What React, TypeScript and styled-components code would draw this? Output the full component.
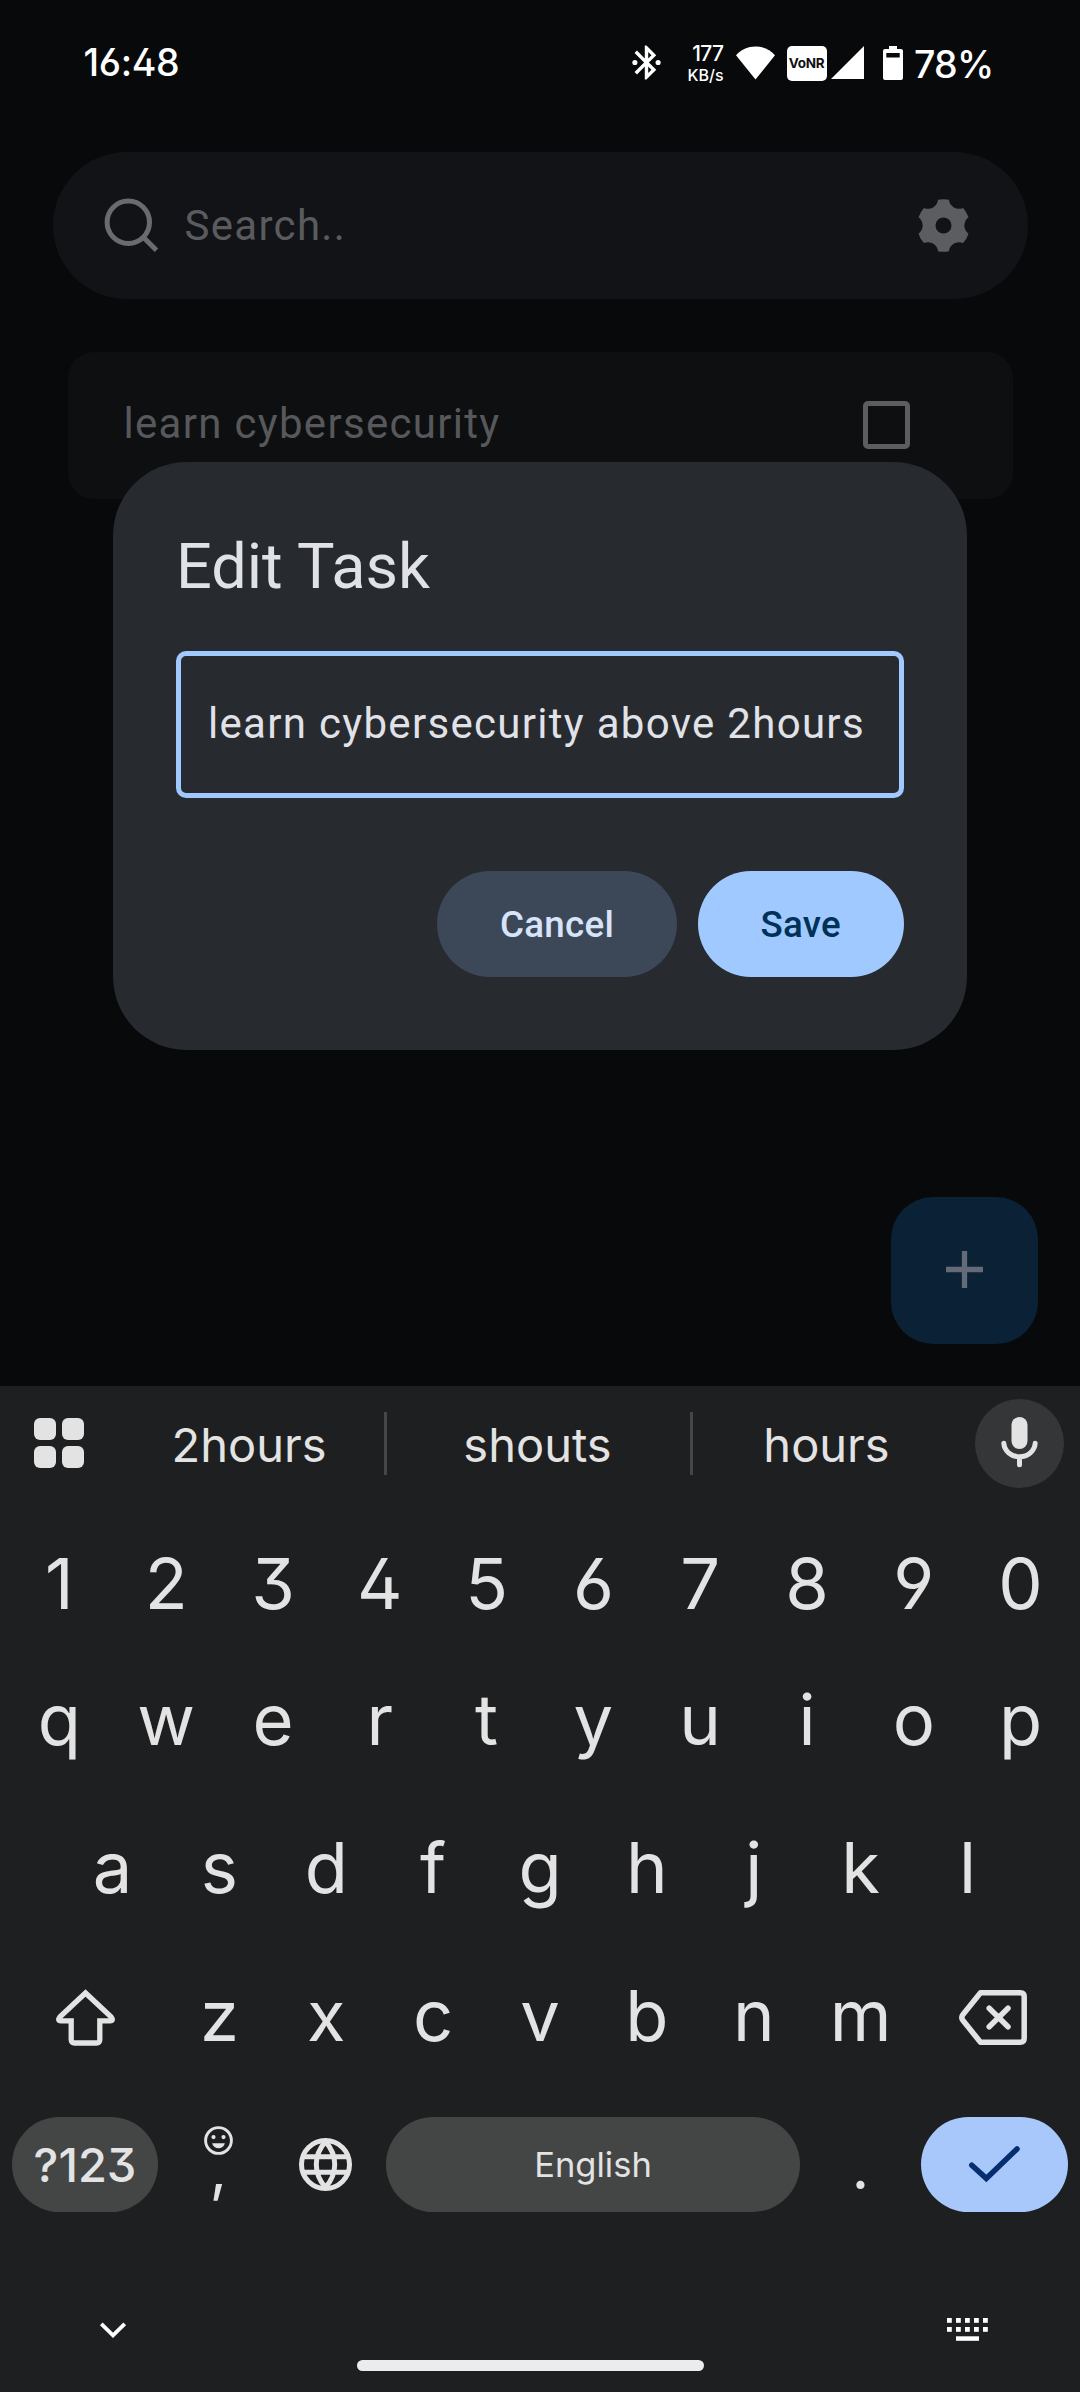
import React from 'react';
import styled, { createGlobalStyle } from 'styled-components';

const GlobalStyle = createGlobalStyle`
  *, *::before, *::after { box-sizing: border-box; }
  body { margin: 0; background: #07090a; }
  button { border: 0; padding: 0; margin: 0; background: none; font: inherit; color: inherit; }
  svg { display: block; flex: none; overflow: visible; }
`;

const roboto = `Roboto, "Noto Sans", sans-serif`;
const inter = `Inter, "Noto Sans", sans-serif`;

const Screen = styled.div`
  position: relative;
  display: flex;
  flex-direction: column;
  width: 1080px;
  height: 2392px;
  overflow: hidden;
  background: #07090a;
  font-family: ${roboto};
`;

/* ---------- status bar ---------- */

const StatusBar = styled.header`
  display: flex;
  align-items: center;
  height: 125px;
  padding: 0 89px 0 83.5px;
  color: #fff;
  font-family: ${inter};
  font-feature-settings: 'cv02', 'cv03', 'cv04';
`;

const Clock = styled.time`
  flex: 1;
  padding-top: 1px;
  font-size: 37.5px;
  font-weight: 500;
  line-height: 44px;
  letter-spacing: -0.3px;
`;

const StatusIcons = styled.div`
  display: flex;
  align-items: center;
`;

const NetSpeed = styled.div`
  display: flex;
  flex-direction: column;
  align-items: flex-end;
  width: 40px;
  margin: 4px 12px 0 17px;
  font-weight: 500;
`;

const SpeedValue = styled.span`
  font-size: 21px;
  line-height: 20px;
  letter-spacing: -0.6px;
`;

const SpeedUnit = styled.span`
  font-size: 16px;
  line-height: 22px;
`;

const NetBadge = styled.span`
  width: 40px;
  height: 35px;
  margin: 1px 4px 0 12px;
  border-radius: 5px;
  background: #fff;
  color: #111;
  font-size: 13.5px;
  font-weight: 700;
  line-height: 35px;
  text-align: center;
  letter-spacing: -0.3px;
`;

const Battery = styled.span`
  margin-top: 5px;
  width: 77px;
  margin-left: 11.5px;
  font-size: 37.5px;
  font-weight: 500;
  line-height: 44px;
  letter-spacing: -0.8px;
  white-space: nowrap;
`;

/* ---------- task list behind the dialog ---------- */

const Page = styled.main`
  display: flex;
  flex-direction: column;
  flex: 1;
  padding-top: 27px;
`;

const SearchBar = styled.div`
  display: flex;
  align-items: center;
  height: 147px;
  margin: 0 52.5px;
  padding: 0 58px 1px 51px;
  border-radius: 74px;
  background: #111317;
`;

const SearchHint = styled.span`
  flex: 1;
  margin-left: 26px;
  color: #5a5b5f;
  font-size: 42px;
  line-height: 63px;
  letter-spacing: 1.3px;
`;

const TaskCard = styled.div`
  display: flex;
  align-items: center;
  height: 147px;
  margin: 53px 67.5px 0;
  padding: 0 102.5px 1px 56px;
  border-radius: 26px;
  background: #0e0f11;
`;

const TaskTitle = styled.span`
  flex: 1;
  margin-top: -4px;
  color: #57585b;
  font-size: 42px;
  line-height: 63px;
  letter-spacing: 1.3px;
`;

const CheckBox = styled.span`
  width: 47px;
  height: 48px;
  border: 5px solid #5c5d61;
  border-radius: 5px;
`;

const Fab = styled.button`
  position: absolute;
  right: 42px;
  top: 1197px;
  display: grid;
  place-items: center;
  width: 147px;
  height: 147px;
  padding-bottom: 2px;
  border-radius: 42px;
  background: #0b2135;
`;

/* ---------- dialog ---------- */

const Dialog = styled.section`
  position: absolute;
  left: 113px;
  top: 462px;
  display: flex;
  flex-direction: column;
  width: 854px;
  height: 588px;
  padding: 63px;
  border-radius: 73.5px;
  background: #272a2f;
`;

const DialogTitle = styled.h1`
  margin: 0;
  color: #e1e2e8;
  font-size: 63px;
  font-weight: 400;
  line-height: 84px;
`;

const TextField = styled.div`
  display: flex;
  align-items: center;
  height: 147px;
  margin-top: 42px;
  padding: 0 27px;
  border: 5px solid #a0caff;
  border-radius: 10px;
  color: #e1e2e8;
  font-size: 42px;
  line-height: 63px;
  letter-spacing: 1.3px;
  white-space: nowrap;
`;

const FieldValue = styled.span`
  margin-top: -2px;
`;

const Actions = styled.div`
  display: flex;
  justify-content: flex-end;
  gap: 20.5px;
  margin-top: 73px;
`;

const PillButton = styled.button<{ $primary?: boolean }>`
  width: ${p => (p.$primary ? 206.5 : 240)}px;
  height: 105.5px;
  padding-top: 2px;
  border-radius: 53px;
  background: ${p => (p.$primary ? '#a0caff' : '#3c4858')};
  color: ${p => (p.$primary ? '#003258' : '#d7e3f8')};
  font-size: 36.75px;
  font-weight: 500;
  line-height: 103.5px;
  letter-spacing: 0.26px;
  text-align: center;
`;

/* ---------- keyboard ---------- */

const Keyboard = styled.section`
  display: flex;
  flex-direction: column;
  height: 1006px;
  background: #1e1f21;
  color: #e3e3e3;
  font-family: ${inter};
  font-feature-settings: 'cv02', 'cv03', 'cv04', 'cv09';
`;

const SuggestionBar = styled.div`
  display: flex;
  align-items: center;
  height: 115px;
  margin-bottom: 20px;
  padding: 0 16px 0 34px;
`;

const AppsGrid = styled.span`
  display: grid;
  margin-bottom: 1px;
  grid-template-columns: 22px 22px;
  grid-auto-rows: 22px;
  gap: 6px;
`;

const AppsCell = styled.span`
  border-radius: 6px;
  background: #e3e3e3;
`;

const Suggestions = styled.div`
  display: flex;
  align-items: center;
  width: 846px;
  margin: 0 18px 0 27px;
`;

const Suggestion = styled.span<{ $width: number; $nudge?: number }>`
  width: ${p => p.$width}px;
  padding-top: 2px;
  text-indent: ${p => p.$nudge ?? 0}px;
  font-size: 47px;
  line-height: 56px;
  text-align: center;
`;

const Divider = styled.span`
  width: 3px;
  height: 63px;
  background: #444647;
`;

const MicButton = styled.button`
  display: grid;
  place-items: center;
  width: 89px;
  height: 89px;
  padding-bottom: 2px;
  border-radius: 50%;
  background: #353638;
`;

const KeyRow = styled.div<{ $height?: number; $inset?: number }>`
  display: flex;
  align-items: center;
  height: ${p => p.$height ?? 148}px;
  padding: 0 ${p => p.$inset ?? 6}px;
`;

const Key = styled.button`
  flex: 1;
  padding-top: 1px;
  font-size: 70.5px;
  line-height: 100px;
  text-align: center;
`;

const WideKey = styled.button`
  display: grid;
  place-items: center;
  width: 160px;
  height: 100px;
  padding: 4px 2px 0 0;
`;

const BottomRow = styled.div`
  display: flex;
  align-items: center;
  gap: 7px;
  height: 150px;
  padding: 0 12px;
`;

const PillKey = styled.button<{ $width: number; $accent?: boolean; $size?: number; $weight?: number }>`
  display: flex;
  align-items: center;
  justify-content: center;
  width: ${p => p.$width}px;
  height: 95px;
  border-radius: 48px;
  background: ${p => (p.$accent ? '#a8c7fa' : '#444645')};
  font-size: ${p => p.$size ?? 34.5}px;
  font-weight: ${p => p.$weight ?? 400};
`;

const KeyPair = styled.div`
  display: flex;
`;

const SmallKey = styled.button`
  display: flex;
  flex-direction: column;
  align-items: center;
  justify-content: center;
  width: 107px;
  height: 95px;
`;

const Comma = styled.span`
  height: 48px;
  font-size: 60px;
  line-height: 27px;
`;

const Period = styled.span`
  padding-top: 6px;
  font-size: 62px;
  line-height: 80px;
`;

const NavRow = styled.div`
  display: flex;
  align-items: flex-start;
  justify-content: space-between;
  height: 121px;
  padding: 79px 92px 0 100px;
`;

const HomeBar = styled.div`
  width: 347px;
  height: 10.5px;
  margin: 0 376px 0 357px;
  border-radius: 6px;
  background: #ececec;
`;

/* ---------- icons ---------- */

const gearPath = (() => {
  const point = (deg: number) => {
    const a = (deg * Math.PI) / 180;
    return `${(26.3 * Math.cos(a)).toFixed(2)} ${(26.3 * Math.sin(a)).toFixed(2)}`;
  };
  let d = `M${point(-102)}`;
  for (let i = 0; i < 6; i++) {
    const c = -90 + i * 60;
    d += `A26.3 26.3 0 0 1 ${point(c + 12)}A10 10 0 0 0 ${point(c + 48)}`;
  }
  return `${d}Z M8 0A8 8 0 1 0 -8 0A8 8 0 1 0 8 0Z`;
})();

const GearIcon = () => (
  <svg width="53" height="53" viewBox="-26.5 -26.5 53 53">
    <path d={gearPath} fill="#5c5d61" fillRule="evenodd" />
  </svg>
);

const SearchIcon = () => (
  <svg width="55" height="55" viewBox="0 0 55 55" fill="none" stroke="#6a6b6d" strokeWidth="5">
    <circle cx="24.3" cy="24.3" r="21.2" />
    <path d="M38.8 38.8L52.5 52.3" />
  </svg>
);

const BluetoothIcon = () => (
  <svg width="41" height="41" viewBox="0 0 24 24" fill="#fff">
    <circle cx="5.2" cy="12" r="1.5" />
    <circle cx="18.8" cy="12" r="1.5" />
    <path d="M17.71 7.71L12 2h-1v7.59L6.41 5 5 6.41 10.59 12 5 17.59 6.41 19 11 14.41V22h1l5.71-5.71-4.3-4.29 4.3-4.29zM13 5.83l1.88 1.88L13 9.59V5.83zm1.88 10.46L13 18.17v-3.76l1.88 1.88z" />
  </svg>
);

const WifiIcon = () => (
  <svg width="39" height="34" viewBox="0 0 39 34" fill="#fff">
    <path d="M0 9.2C5 3.5 12 .5 19.5 .5S34 3.5 39 9.2L19.5 33.5Z" />
  </svg>
);

const SignalIcon = () => (
  <svg width="33" height="33" viewBox="0 0 33 33" fill="#fff">
    <path d="M0 33L33 0V33Z" />
  </svg>
);

const BatterySlot = styled.span`
  margin-left: 19px;
`;

const BatteryIcon = () => (
  <BatterySlot>
    <svg width="20" height="34" viewBox="0 0 20 34" fill="#fff">
      <path fillRule="evenodd" d="M6 0H14V3H18Q20 3 20 5V32Q20 34 18 34H2Q0 34 0 32V5Q0 3 2 3H6ZM3.3 7V11.6H16.7V7Z" />
    </svg>
  </BatterySlot>
);

const PlusIcon = () => (
  <svg width="37" height="37" viewBox="0 0 37 37" stroke="#646b78" strokeWidth="5.3">
    <path d="M18.5 0V37M0 18.5H37" />
  </svg>
);

const MicIcon = () => (
  <svg width="37" height="51" viewBox="0 0 37 51" fill="none" stroke="#e3e3e3" strokeWidth="5" strokeLinecap="round">
    <rect x="10.5" y="0" width="16" height="32" rx="8" fill="#e3e3e3" stroke="none" />
    <path d="M2.8 26.2C3.2 33.8 10 39.8 18.5 39.8S33.8 33.8 34.2 26.2M18.5 40V47.7" />
  </svg>
);

const ShiftIcon = () => (
  <svg width="59" height="57" viewBox="0 0 59 57" fill="none" stroke="#e3e3e3" strokeWidth="5.3">
    <path d="M29.5 4L4 27.9Q1 31.9 5 31.9H15.2V50.5Q15.2 54 18.7 54H40.3Q43.8 54 43.8 50.5V31.9H54Q58 31.9 55 27.9Z" />
  </svg>
);

const BackspaceIcon = () => (
  <svg width="68" height="55" viewBox="0 0 68 55" fill="none" stroke="#e3e3e3" strokeWidth="5.5" strokeLinecap="round">
    <path d="M21.5 2.8H61.3Q65.2 2.8 65.2 6.8V48.2Q65.2 52.2 61.3 52.2H21.5L4 30.6Q1.6 27.5 4 24.4Z" strokeLinejoin="round" />
    <path d="M30.2 18.2L49 36.8M49 18.2L30.2 36.8" />
  </svg>
);

const SmileIcon = () => (
  <svg width="29" height="29" viewBox="-14.5 -14.5 29 29" fill="#e3e3e3">
    <circle r="12.9" fill="none" stroke="#e3e3e3" strokeWidth="2.9" />
    <circle cx="-5" cy="-3.4" r="2.1" />
    <circle cx="5" cy="-3.4" r="2.1" />
    <path d="M-6.4 2.8H6.4C5.4 6.4 3 7.8 0 7.8S-5.4 6.4 -6.4 2.8Z" />
  </svg>
);

const GlobeIcon = () => (
  <svg width="53" height="53" viewBox="-26.5 -26.5 53 53" fill="none" stroke="#e3e3e3" strokeWidth="5">
    <circle r="24" />
    <path d="M0 -23C-12.3 -9 -12.3 9 0 23M0 -23C12.3 -9 12.3 9 0 23M-23 -7.8H23M-23 7.8H23" />
  </svg>
);

const CheckIcon = () => (
  <svg width="51" height="37" viewBox="0 0 51 37" fill="none" stroke="#062e6f" strokeWidth="5.5" strokeLinecap="round">
    <path d="M2.8 19.2L17.3 32.4L48 3" />
  </svg>
);

const ChevronIcon = () => (
  <svg width="26" height="26" viewBox="0 -4 26 26" fill="none" stroke="#fff" strokeWidth="3.8">
    <path d="M1.3 1.8L13 13.3L24.7 1.8" />
  </svg>
);

const KeyboardIcon = () => (
  <svg width="41" height="23" viewBox="0 0 41 23" fill="#fff">
    {[0, 9].map(y => [0, 9, 18, 27, 36].map(x => <rect key={`${x}-${y}`} x={x} y={y} width="4.8" height="4.8" />))}
    <rect x="9" y="18.3" width="23" height="4.5" />
  </svg>
);

const keys = (letters: string) => letters.split('').map(letter => <Key key={letter}>{letter}</Key>);

export default function App() {
  return (
    <Screen>
      <GlobalStyle />
      <StatusBar>
        <Clock>16:48</Clock>
        <StatusIcons>
          <BluetoothIcon />
          <NetSpeed>
            <SpeedValue>177</SpeedValue>
            <SpeedUnit>KB/s</SpeedUnit>
          </NetSpeed>
          <WifiIcon />
          <NetBadge>VoNR</NetBadge>
          <SignalIcon />
          <BatteryIcon />
          <Battery>78%</Battery>
        </StatusIcons>
      </StatusBar>

      <Page>
        <SearchBar>
          <SearchIcon />
          <SearchHint>Search..</SearchHint>
          <GearIcon />
        </SearchBar>
        <TaskCard>
          <TaskTitle>learn cybersecurity</TaskTitle>
          <CheckBox />
        </TaskCard>
      </Page>

      <Keyboard>
        <SuggestionBar>
          <AppsGrid>
            <AppsCell />
            <AppsCell />
            <AppsCell />
            <AppsCell />
          </AppsGrid>
          <Suggestions>
            <Suggestion $width={273} $nudge={3}>2hours</Suggestion>
            <Divider />
            <Suggestion $width={303} $nudge={-2}>shouts</Suggestion>
            <Divider />
            <Suggestion $width={264} $nudge={3}>hours</Suggestion>
          </Suggestions>
          <MicButton>
            <MicIcon />
          </MicButton>
        </SuggestionBar>
        <KeyRow $height={124}>{keys('1234567890')}</KeyRow>
        <KeyRow>{keys('qwertyuiop')}</KeyRow>
        <KeyRow $inset={59}>{keys('asdfghjkl')}</KeyRow>
        <KeyRow>
          <WideKey>
            <ShiftIcon />
          </WideKey>
          {keys('zxcvbnm')}
          <WideKey>
            <BackspaceIcon />
          </WideKey>
        </KeyRow>
        <BottomRow>
          <PillKey $width={146} $size={47} $weight={500}>?123</PillKey>
          <KeyPair>
            <SmallKey>
              <SmileIcon />
              <Comma>,</Comma>
            </SmallKey>
            <SmallKey>
              <GlobeIcon />
            </SmallKey>
          </KeyPair>
          <PillKey $width={414}>English</PillKey>
          <SmallKey>
            <Period>.</Period>
          </SmallKey>
          <PillKey $width={147} $accent>
            <CheckIcon />
          </PillKey>
        </BottomRow>
        <NavRow>
          <ChevronIcon />
          <KeyboardIcon />
        </NavRow>
        <HomeBar />
      </Keyboard>

      <Fab>
        <PlusIcon />
      </Fab>

      <Dialog>
        <DialogTitle>Edit Task</DialogTitle>
        <TextField>
          <FieldValue>learn cybersecurity above 2hours</FieldValue>
        </TextField>
        <Actions>
          <PillButton>Cancel</PillButton>
          <PillButton $primary>Save</PillButton>
        </Actions>
      </Dialog>
    </Screen>
  );
}
